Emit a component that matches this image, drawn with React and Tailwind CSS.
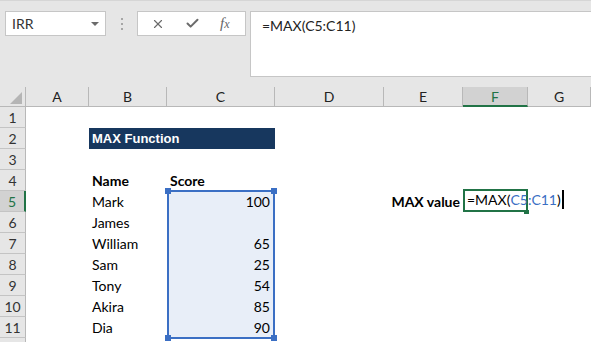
import { X, Check } from "lucide-react";

const cols = ["A", "B", "C", "D", "E", "F", "G"];
const colStart = [
  "col-start-2",
  "col-start-3",
  "col-start-4",
  "col-start-5",
  "col-start-6",
  "col-start-7",
  "col-start-8",
];
const rowStart = [
  "row-start-2",
  "row-start-3",
  "row-start-4",
  "row-start-5",
  "row-start-6",
  "row-start-7",
  "row-start-8",
  "row-start-9",
  "row-start-10",
  "row-start-11",
  "row-start-12",
  "row-start-13",
];

const people = [
  { name: "Mark", score: "100" },
  { name: "James", score: "" },
  { name: "William", score: "65" },
  { name: "Sam", score: "25" },
  { name: "Tony", score: "54" },
  { name: "Akira", score: "85" },
  { name: "Dia", score: "90" },
];

function Toolbar() {
  return (
    <div className="h-[87px] bg-[#e6e6e6] border-t border-[#d6d6d6] flex items-start pt-[10px] pl-[5px]">
      {/* Name box */}
      <div className="w-[101px] h-[25px] bg-white border border-[#c6c6c6] flex items-center justify-between pl-[6px] pr-[6px]">
        <span className="text-[14px] text-[#333] leading-none">IRR</span>
        <span className="w-0 h-0 border-l-[4px] border-r-[4px] border-t-[4px] border-l-transparent border-r-transparent border-t-[#6b6b6b]" />
      </div>

      {/* grip dots */}
      <div className="w-[31px] h-[25px] flex flex-col items-center justify-center gap-[3px]">
        <span className="w-[2px] h-[2px] bg-[#a6a6a6]" />
        <span className="w-[2px] h-[2px] bg-[#a6a6a6]" />
        <span className="w-[2px] h-[2px] bg-[#a6a6a6]" />
      </div>

      {/* cancel / enter / fx */}
      <div className="w-[109px] h-[25px] bg-white border border-[#c6c6c6] flex items-center pl-[13px]">
        <X className="w-[14px] h-[14px] text-[#6b6b6b]" strokeWidth={2} />
        <Check className="w-[15px] h-[15px] text-[#6b6b6b] ml-[20px]" strokeWidth={3.2} />
        <span className="ml-[20px] text-[15px] italic text-[#666] leading-none font-['Liberation_Serif',serif]">
          f<span className="text-[12px]">x</span>
        </span>
      </div>

      {/* formula bar */}
      <div className="flex-1 ml-[4px] h-[66px] bg-white border-l border-b border-t border-[#c6c6c6] pl-[11px] pt-[1px]">
        <span className="text-[14px] text-[#222]">=MAX(C5:C11)</span>
      </div>
    </div>
  );
}

function Sheet() {
  return (
    <div className="grid grid-cols-[26px_63px_78px_108px_109px_79px_65px_1fr] grid-rows-[20px_repeat(12,21px)] bg-white">
      {/* corner */}
      <div className="col-start-1 row-start-1 bg-[#e6e6e6] border-r border-b border-[#b8b8b8] flex items-end justify-end pr-[3px] pb-[2px]">
        <svg width="12" height="12" viewBox="0 0 12 12">
          <polygon points="12,0 12,12 0,12" fill="#b5b5b5" />
        </svg>
      </div>

      {/* column headers */}
      {cols.map((c, i) =>
        c === "F" ? (
          <div
            key={c}
            className={`${colStart[i]} row-start-1 bg-[#d2d2d2] border-r border-[#b8b8b8] border-b-2 border-b-[#217346] flex items-center justify-center text-[14px] text-[#217346]`}
          >
            {c}
          </div>
        ) : (
          <div
            key={c}
            className={`${colStart[i]} row-start-1 bg-[#e6e6e6] border-r border-b border-[#b8b8b8] flex items-center justify-center text-[14px] text-[#222]`}
          >
            {c}
          </div>
        ),
      )}

      {/* row headers */}
      {rowStart.map((r, i) =>
        i === 4 ? (
          <div
            key={r}
            className={`col-start-1 ${r} bg-[#d2d2d2] border-b border-[#c4c4c4] border-r-2 border-r-[#217346] flex items-center justify-center text-[14px] text-[#217346]`}
          >
            {i + 1}
          </div>
        ) : (
          <div
            key={r}
            className={`col-start-1 ${r} bg-[#e6e6e6] border-b border-[#c4c4c4] border-r border-r-[#b8b8b8] flex items-center justify-center text-[14px] text-[#333]`}
          >
            {i < 11 ? i + 1 : ""}
          </div>
        ),
      )}

      {/* title */}
      <div className="col-start-3 col-span-2 row-start-3 bg-[#17375e] flex items-center pl-[3px] text-[13px] font-bold text-white font-['Liberation_Sans',sans-serif]">
        MAX Function
      </div>

      {/* selection C5:C11 */}
      <div className="col-start-4 row-start-6 row-span-7 -mt-[1px] -mb-[1px] bg-[#e8eef8] border-2 border-[#3b6fc4] relative">
        <span className="absolute -left-[4px] -top-[4px] w-[6px] h-[6px] bg-[#3b6fc4]" />
        <span className="absolute -right-[4px] -top-[4px] w-[6px] h-[6px] bg-[#3b6fc4]" />
        <span className="absolute -left-[4px] -bottom-[4px] w-[6px] h-[6px] bg-[#3b6fc4]" />
        <span className="absolute -right-[4px] -bottom-[4px] w-[6px] h-[6px] bg-[#3b6fc4]" />
      </div>

      {/* headings */}
      <div className="col-start-3 row-start-5 flex items-end pl-[3px] text-[14px] font-bold text-black">
        Name
      </div>
      <div className="col-start-4 row-start-5 flex items-end pl-[3px] text-[14px] font-bold text-black">
        Score
      </div>

      {/* data */}
      {people.map((p, i) => (
        <div key={p.name} className="contents">
          <div
            className={`col-start-3 ${rowStart[i + 4]} flex items-end pl-[3px] text-[14px] text-black`}
          >
            {p.name}
          </div>
          <div
            className={`col-start-4 ${rowStart[i + 4]} relative z-10 flex items-end justify-end pr-[5px] text-[14px] text-black`}
          >
            {p.score}
          </div>
        </div>
      ))}

      {/* MAX value label */}
      <div className="col-start-6 row-start-6 flex items-end justify-end pr-[3px] text-[14px] font-bold text-black">
        MAX value
      </div>

      {/* active cell F5 in edit mode */}
      <div className="col-start-7 row-start-6 -mt-[2px] border-2 border-[#217346] relative flex items-end">
        <span className="pl-[2px] text-[14px] text-black whitespace-nowrap flex items-center">
          =MAX(<span className="text-[#3b6fc4]">C5:C11</span>)
          <span className="ml-[1px] w-[2px] h-[19px] bg-black" />
        </span>
        <span className="absolute -right-[3px] -bottom-[4px] w-[5px] h-[4px] bg-[#217346]" />
      </div>
    </div>
  );
}

export default function App() {
  return (
    <div className="w-[591px] h-[342px] overflow-hidden bg-white font-['Lato',sans-serif]">
      <Toolbar />
      <Sheet />
    </div>
  );
}
